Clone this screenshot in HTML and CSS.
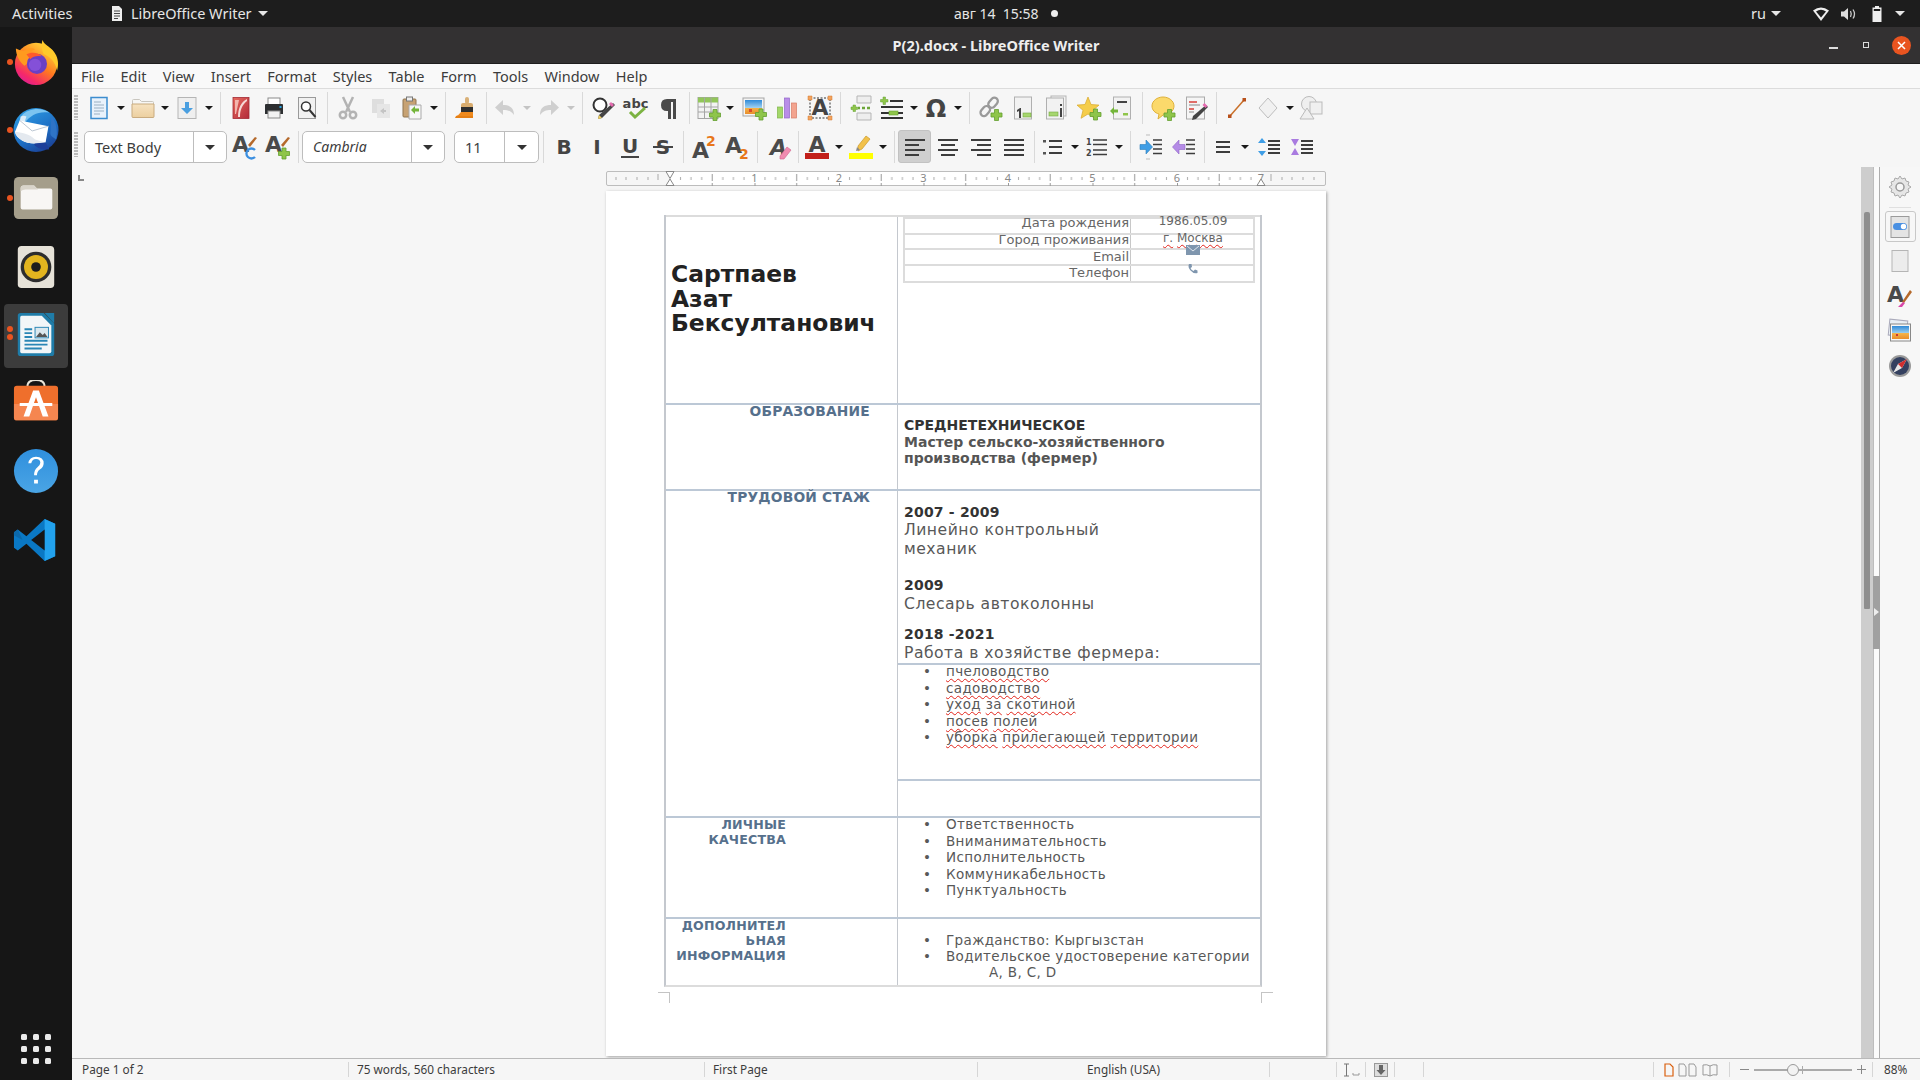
FILE: index.html
```html
<!DOCTYPE html>
<html lang="ru">
<head>
<meta charset="utf-8">
<title>P(2).docx - LibreOffice Writer</title>
<link rel="stylesheet" href="styles.css">
</head>
<body>
<svg class="defs" width="0" height="0" aria-hidden="true"><defs>
<path id="plus" d="M15.5 12.5h4v3.5h3.5v4h-3.5v3.5h-4v-3.5h-3.5v-4h3.5z" fill="#8fc54a" stroke="#63a030" stroke-width=".8"/>
<linearGradient id="ffg" x1=".8" y1=".1" x2=".2" y2="1"><stop offset="0" stop-color="#ffd338"/><stop offset=".45" stop-color="#ff7a1f"/><stop offset=".8" stop-color="#f5286a"/><stop offset="1" stop-color="#d81f9e"/></linearGradient>
<linearGradient id="tbg" x1=".2" y1="0" x2=".8" y2="1"><stop offset="0" stop-color="#2f9fe6"/><stop offset=".6" stop-color="#1c6cc2"/><stop offset="1" stop-color="#1b3a8f"/></linearGradient>
<linearGradient id="hlp" x1="0" y1="0" x2="0" y2="1"><stop offset="0" stop-color="#2f8fdd"/><stop offset="1" stop-color="#4aa5e5"/></linearGradient>
<linearGradient id="sky" x1="0" y1="0" x2="0" y2="1"><stop offset="0" stop-color="#2f8ad8"/><stop offset=".55" stop-color="#9fd0f0"/><stop offset=".56" stop-color="#f4b34a"/><stop offset="1" stop-color="#e98d2b"/></linearGradient>
<linearGradient id="pdfg" x1="0" y1="0" x2="1" y2="1"><stop offset="0" stop-color="#e76a5e"/><stop offset="1" stop-color="#b22a3a"/></linearGradient>
<linearGradient id="fld" x1="0" y1="0" x2="0" y2="1"><stop offset="0" stop-color="#f6e2c0"/><stop offset="1" stop-color="#eccf9f"/></linearGradient>
</defs></svg>
<div class="app">
  <header class="topbar">
    <span class="tb-activities">Activities</span>
    <svg class="tb-docicon" viewBox="0 0 12 15"><path d="M1 0h7l3 3v12H1z" fill="#eee"/><path d="M3 5h6M3 7.500h6M3 10h6M3 12.500h4" stroke="#444"/></svg>
    <span class="tb-app">LibreOffice Writer</span><i class="caret tb-c1"></i>
    <span class="tb-date">авг 14&nbsp;&nbsp;15:58</span><i class="tb-dot"></i>
    <span class="tb-lang">ru</span><i class="caret tb-c2"></i>
    <svg class="tb-wifi" viewBox="0 0 16 14"><path d="M0 3.500Q8-2.500 16 3.500L8 14z" fill="#eee"/><path d="M3 4.600Q8 1 13 4.600L8 10.500z" fill="#1d1d1d"/></svg>
    <svg class="tb-vol" viewBox="0 0 16 14"><path d="M0 4.500h3L7 1v12L3 9.500H0z" fill="#ddd"/><path d="M9.500 4q1.500 3 0 6M12 2.500q3 4.500 0 9" stroke="#ccc" fill="none" stroke-width="1.300"/></svg>
    <svg class="tb-bat" viewBox="0 0 10 16"><path d="M3 0h4v1.500h2.500V16H.5V1.500H3z" fill="#eee"/><rect x="1.800" y="3" width="6.400" height="2" fill="#1d1d1d"/></svg>
    <i class="caret tb-c3"></i>
  </header>
  <div class="desk">
    <nav class="dock">
      <div class="tile">
        <i class="run r1"></i>
        <svg class="dk" viewBox="0 0 48 48"><circle cx="24" cy="26" r="22" fill="url(#ffg)"/><path d="M31 1c1 6 10 7 14 16 3 6 2 13 1 16-2-10-8-15-14-17-2-5-3-11-1-15z" fill="#ffca2b"/><path d="M3 10c3 1 6 3 9 2 5-3 9-3 11-1-4 1-7 4-7 6 3 0 4 1 6 3L12 28C7 24 3 17 3 10z" fill="#ff9a1f"/><circle cx="25" cy="26" r="10.500" fill="#6b3fc4"/><circle cx="23" cy="27" r="6.500" fill="#8450d8"/><path d="M14 16c5-3 13-2 16 2-5-1-9 0-12 3z" fill="#ff5a2b"/></svg>
      </div>
      <div class="tile">
        <i class="run r1"></i>
        <svg class="dk" viewBox="0 0 48 48"><ellipse cx="24" cy="24" rx="23.500" ry="23" fill="url(#tbg)"/><path d="M9 9C16 1 30 0 38 6 28 4 18 8 12 17z" fill="#7cc4f0"/><path d="M8 10q3-2 6 0l-2 6-5-1z" fill="#dcecf8"/><path d="M2 26 7 14l30 6-3 17-11 1C12 38 4 33 2 26z" fill="#fff"/><path d="M7 14l13 11 17-5" fill="none" stroke="#b9c4d1"/><path d="M2 26c6 0 16 2 21 8l11 3-11 1C12 38 4 33 2 26z" fill="#e4e9ef"/><path d="M40 9c5 7 7 16 5 25-3-2-6-4-6-6z" fill="#2f74c6"/><path d="M34 37l-11 1c-4 1 6 8 15 6z" fill="#1d3f9a"/></svg>
      </div>
      <div class="tile">
        <i class="run r1"></i>
        <svg class="dk" viewBox="0 0 48 48"><rect x="1" y="2" width="46" height="44" rx="5" fill="#a59e8b"/><path d="M8 14q0-3 3-3h11l3 3h14q2 0 2 2v18q0 2-2 2H10q-2 0-2-2z" fill="#f8f6f4"/><path d="M8 17v-3q0-3 3-3h11l4 4H13q-3 0-5 2z" fill="#d9d4ca"/></svg>
      </div>
      <div class="tile">
        <svg class="dk" viewBox="0 0 48 48"><rect x="5" y="2" width="38" height="44" rx="4" fill="#e6e2d8"/><circle cx="24" cy="24" r="16" fill="#2d2d2d"/><circle cx="24" cy="24" r="12.500" fill="#e3b51f"/><circle cx="24" cy="24" r="5" fill="#1d1d1d"/></svg>
      </div>
      <div class="tile tile-on">
        <i class="run r2a"></i><i class="run r2b"></i>
        <svg class="dk" viewBox="0 0 48 48"><path d="M8 1h24l11 11v31q0 3-3 3H8q-3 0-3-3V4q0-3 3-3z" fill="#1f7ca8"/><path d="M9 4h21l10 10v27q0 2-2 2H9q-1.500 0-1.500-2V6Q7.500 4 9 4z" fill="#f2f6f8"/><path d="M33 1h10v10q0 1-1 0z" fill="#1f7ca8"/><path d="M12 18h8M12 22h8M12 26h8M12 30h24M12 34h24M12 38h18" stroke="#2a86b5" stroke-width="2"/><rect x="23" y="16" width="14" height="11" fill="#dbe8ee" stroke="#2a86b5"/><path d="M24 26l4-5 3 3 2-2 3 4z" fill="#555"/></svg>
      </div>
      <div class="tile">
        <svg class="dk" viewBox="0 0 48 48"><path d="M15 7q0-7 9-7t9 7" fill="none" stroke="#e9e4d8" stroke-width="2"/><rect x="1" y="6" width="46" height="36" rx="3" fill="#ef6f2c"/><path d="M1 25h46v14q0 3-3 3H4q-3 0-3-3z" fill="#f58650"/><path d="M21 11h6l10 27h-6L24 18l-7 20h-6z" fill="#fff"/><path d="M7 24h34v3H7z" fill="#fff"/></svg>
      </div>
      <div class="tile">
        <svg class="dk" viewBox="0 0 48 48"><circle cx="24" cy="24" r="23" fill="url(#hlp)"/><path d="M16 16q1-7 8-7 8 0 8 7 0 4-4 6.500-3 2-3 6h-3q0-6 3.500-8.500 3-2 3-4.500 0-4-4.500-4-4 0-5 4.500zM22 33h4v4h-4z" fill="#fff"/></svg>
      </div>
      <div class="tile">
        <svg class="dk" viewBox="0 0 48 48"><path d="M33 2 44 7v34l-11 5-19-18L5 35l-4-3 0-16 4-3 9 7z" fill="#0a78c4"/><path d="M33 2 44 7v34l-11 5z" fill="#22a2ee"/><path d="M33 13v22L19 24z" fill="#161616"/><path d="M5 13l-4 3v3l9 5z" fill="#0c68aa"/></svg>
      </div>
      <div class="apps"><i></i><i></i><i></i><i></i><i></i><i></i><i></i><i></i><i></i></div>
    </nav>
    <div class="win">
      <div class="titlebar">
        <span></span>
        <span class="title">P(2).docx - LibreOffice Writer</span>
        <div class="wctl">
          <i class="w-min"></i><i class="w-max"></i>
          <svg class="w-close" viewBox="0 0 19 19"><circle cx="9.500" cy="9.500" r="9.500" fill="#e95420"/><path d="M6 6l7 7M13 6l-7 7" stroke="#fff" stroke-width="1.500"/></svg>
        </div>
      </div>
      <div class="menubar">
        <span>File</span><span>Edit</span><span>View</span><span>Insert</span><span>Format</span><span>Styles</span><span>Table</span><span>Form</span><span>Tools</span><span>Window</span><span>Help</span>
      </div>
      <div class="toolbar tb1">
        <i class="grip"></i>
        <b class="bd"><svg class="i" viewBox="0 0 24 24"><path d="M4 1.500h16v21H4z" fill="#e9f2fb" stroke="#3c8dcf" stroke-width="1.500"/><path d="M7 6h7M7 9h10M7 12h10M7 15h10M7 18h6" stroke="#9bb0c2"/></svg></b><b class="ar"></b>
        <b class="bd"><svg class="i" viewBox="0 0 24 24"><path d="M1.500 6V4.500q0-1 1-1h6l2 2h11q1 0 1 1V21H1.500z" fill="#f7f7f5" stroke="#c9c6bf"/><path d="M1 8h22v12.500q0 1-1 1H2q-1 0-1-1z" fill="url(#fld)" stroke="#c9ab7f"/></svg></b><b class="ar"></b>
        <b class="bd"><svg class="i" viewBox="0 0 24 24"><rect x="3" y="1.500" width="18" height="21" fill="#efefef" stroke="#b5b5b5"/><path d="M10 6h4v6h4l-6 6-6-6h4z" fill="#4a9fe0"/></svg></b><b class="ar"></b>
        <i class="sp"></i>
        <b class="b"><svg class="i" viewBox="0 0 24 24"><rect x="4" y="1.500" width="16" height="21" fill="url(#pdfg)" stroke="#a32a33" stroke-width=".8"/><path d="M18 3C12 6 9 12 9 21h2c0-7 2-12 7-16z" fill="#f6d9d6"/><path d="M6 4h4L7 18H6z" fill="#f3b6ae"/></svg></b>
        <b class="b"><svg class="i" viewBox="0 0 24 24"><rect x="6" y="2" width="12" height="7" fill="#fff" stroke="#8a8a8a"/><path d="M3 9q0-1 1-1h16q1 0 1 1v9H3z" fill="#2d2f31"/><rect x="6" y="15" width="12" height="7" fill="#f2f2f2" stroke="#8a8a8a"/><rect x="17.500" y="10" width="2" height="2" fill="#29a3e0"/></svg></b>
        <b class="b"><svg class="i" viewBox="0 0 24 24"><rect x="3.500" y="1.500" width="17" height="21" fill="#f1f1f1" stroke="#9a9a9a"/><circle cx="11" cy="10.500" r="4.500" fill="#fff" stroke="#333" stroke-width="1.500"/><path d="M14.500 14l6 7" stroke="#333" stroke-width="2"/></svg></b>
        <i class="sp"></i>
        <b class="b"><svg class="i" viewBox="0 0 24 24" fill="none" stroke="#b3b3b3" stroke-width="2.500"><path d="M7 1l7 15M17 1l-7 15"/><circle cx="7" cy="19" r="3.200"/><circle cx="17" cy="19" r="3.200"/></svg></b>
        <b class="b"><svg class="i" viewBox="0 0 24 24"><rect x="3" y="3" width="12" height="14" fill="#dedede"/><rect x="8" y="8" width="13" height="14" fill="#e6e6e6"/><path d="M15 12l-4 3 4 3v-2h2v-2h-2z" fill="#c4c4c4"/></svg></b>
        <b class="bd"><svg class="i" viewBox="0 0 24 24"><rect x="3" y="3" width="13" height="18" rx="1" fill="#c7a273" stroke="#8f7450"/><rect x="6.500" y="1" width="6" height="4" fill="#eee" stroke="#777"/><path d="M9 9h12v14H9z" fill="#f7f7f7" stroke="#aaa"/><path d="M11 14l4-4v2.500h4v3h-4V18z" fill="#74b53a"/></svg></b><b class="ar"></b>
        <i class="sp"></i>
        <b class="b b-brush"><svg class="i" viewBox="0 0 24 24"><rect x="10" y="1" width="4" height="7" rx="2" fill="#d9b077"/><path d="M6 9q0-2 2-2h8q2 0 2 2v3H6z" fill="#d8ac6f"/><rect x="6" y="11" width="12" height="5" fill="#2f2f2f"/><path d="M6 16h12v4H1q3-1 5-4z" fill="#f08a1d"/><path d="M1 20h17v2H0z" fill="#e57f14"/></svg></b>
        <i class="sp"></i>
        <b class="bd"><svg class="i" viewBox="0 0 24 24"><path d="M10 4v5c6 0 11 2 11 10-3-4-6-5-11-5v5L2 11.500z" fill="#cfcfcf"/></svg></b><b class="ar off"></b>
        <b class="bd"><svg class="i" viewBox="0 0 24 24"><path d="M14 4v5C8 9 3 11 3 19c3-4 6-5 11-5v5l8-7.500z" fill="#cfcfcf"/></svg></b><b class="ar off"></b>
        <i class="sp"></i>
        <b class="b"><svg class="i" viewBox="0 0 24 24"><circle cx="9" cy="9" r="6.500" fill="#fff" stroke="#333" stroke-width="2"/><path d="M22 7l2 2-13 13-4 1 1-4z" fill="#444"/><path d="M20 6l3 3-2 2-3-3z" fill="#e56bb0"/><path d="M8 19l-1 4 4-1z" fill="#f0d060"/></svg></b>
        <b class="b"><svg class="i" viewBox="0 0 24 24"><text x="11.500" y="12" class="sv-abc">abc</text><path d="M6 16l5 5L21 12" fill="none" stroke="#7cb342" stroke-width="3"/></svg></b>
        <b class="b"><svg class="i" viewBox="0 0 24 24"><path d="M21 3H10Q4 3 4 9t6 6h1v8h3V6h2v17h3V3z" fill="#4a4a4a"/></svg></b>
        <i class="sp"></i>
        <b class="bd"><svg class="i" viewBox="0 0 24 24"><rect x="2" y="1.500" width="20" height="21" fill="#f3f3f3" stroke="#a5a5a5"/><rect x="2" y="1.500" width="20" height="5" fill="#92c65a"/><path d="M2 11h20M2 16h20M8.500 1.500v21M15 1.500v21" stroke="#a5a5a5"/><use href="#plus" x="1.500" y="1"/></svg></b><b class="ar"></b>
        <b class="b"><svg class="i" viewBox="0 0 24 24"><rect x="1" y="2" width="21" height="18" fill="#f4f4f4" stroke="#a5a5a5"/><rect x="3" y="4" width="17" height="14" fill="url(#sky)"/><path d="M7 13h3v3H7z" fill="#d94a2a"/><use href="#plus" x="1.500" y=".5"/></svg></b>
        <b class="b"><svg class="i" viewBox="0 0 24 24"><rect x="2.500" y="11" width="5" height="11" fill="#a4d86a" stroke="#7fb548" stroke-width=".7"/><rect x="9.500" y="2" width="5" height="20" fill="#b98de8" stroke="#9266c9" stroke-width=".7"/><rect x="16.500" y="7" width="5" height="15" fill="#f3a48f" stroke="#d87c66" stroke-width=".7"/></svg></b>
        <b class="b"><svg class="i" viewBox="0 0 24 24"><rect x="2" y="2" width="20" height="20" fill="none" stroke="#333" stroke-dasharray="2 1.500"/><text x="12" y="19" class="sv-a" text-anchor="middle">A</text><path d="M0 0h4v4H0zM20 0h4v4h-4zM0 20h4v4H0zM20 20h4v4h-4z" fill="#f2a35e" stroke="#d07a30" stroke-width=".5"/></svg></b>
        <i class="sp"></i>
        <b class="b"><svg class="i" viewBox="0 0 24 24"><path d="M8 0h14v7H8zM8 17h14v7H8z" fill="#eee" stroke="#b5b5b5"/><path d="M9 12h2M13 12h3M18 12h3" stroke="#6da63a" stroke-width="2.500"/><path d="M2 11h2V9h2.500v2h2v2.500h-2v2H4v-2H2z" fill="#8fc54a" stroke="#63a030" stroke-width=".5"/></svg></b>
        <b class="bd"><svg class="i" viewBox="0 0 24 24"><path d="M10 5h13M1 11h22M1 17h8M18 17h5M1 22h22" stroke="#333" stroke-width="2"/><rect x="9" y="15" width="9" height="4" fill="#8fc54a" stroke="#63a030" stroke-width=".6"/><path d="M3 1h2.500v2.500H8V6H5.500v2.500H3V6H.5V3.500H3z" fill="#8fc54a" stroke="#63a030" stroke-width=".5"/></svg></b><b class="ar"></b>
        <b class="bd"><svg class="i" viewBox="0 0 24 24"><text x="12" y="21" class="sv-o" text-anchor="middle">Ω</text></svg></b><b class="ar"></b>
        <i class="sp"></i>
        <b class="b"><svg class="i" viewBox="0 0 24 24"><g fill="none" stroke="#9a9a9a" stroke-width="2.300"><rect x="12" y="1" width="7" height="11" rx="3.500" transform="rotate(40 15 6)"/><rect x="4" y="10" width="7" height="11" rx="3.500" transform="rotate(40 8 15)"/></g><use href="#plus" x="1" y="1"/></svg></b>
        <b class="b"><svg class="i" viewBox="0 0 24 24"><rect x="3.500" y="1" width="17" height="22" fill="#f2f2f2" stroke="#b0b0b0"/><path d="M6 14l3-2h1v10H8v-7l-2 1z" fill="#444"/><rect x="12" y="17" width="8" height="4" fill="#a6d66e" stroke="#76a940" stroke-width=".6"/></svg></b>
        <b class="b"><svg class="i" viewBox="0 0 24 24"><rect x="7" y="0" width="15" height="20" fill="#f2f2f2" stroke="#b5b5b5"/><rect x="2.500" y="2" width="17" height="21" fill="#f2f2f2" stroke="#b0b0b0"/><rect x="5" y="16" width="9" height="4" fill="#a6d66e" stroke="#76a940" stroke-width=".6"/><path d="M16 12h2v9h-2zM16 8h2v2h-2z" fill="#444"/></svg></b>
        <b class="b"><svg class="i" viewBox="0 0 24 24"><path d="M11 1l3 7.500 8 .6-6 5.200 2 8L11 18l-7 4.300 2-8L0 9.100l8-.6z" fill="#f5cd4a" stroke="#d9a72a" stroke-width=".7"/><use href="#plus" x="1" y=".5"/></svg></b>
        <b class="b"><svg class="i" viewBox="0 0 24 24"><rect x="3.500" y="1" width="17" height="22" fill="#f2f2f2" stroke="#b0b0b0"/><path d="M7 6h10" stroke="#444" stroke-width="2"/><rect x="13" y="17" width="5" height="2.500" fill="#8fc54a"/><path d="M0 15l4-4v2.500h4v3H4V19z" fill="#74b53a"/></svg></b>
        <i class="sp"></i>
        <b class="b"><svg class="i" viewBox="0 0 24 24"><path d="M12 1c6 0 11 4 11 9s-5 9-11 9l-5 4 1-5c-4-1-7-4-7-8 0-5 5-9 11-9z" fill="#fbd96b" stroke="#dfb13a"/><use href="#plus" x="1" y="1"/></svg></b>
        <b class="b"><svg class="i" viewBox="0 0 24 24"><rect x="2.500" y="1" width="18" height="22" fill="#f5f5f5" stroke="#aaa"/><path d="M5 6h8M5 13h5" stroke="#d9423a" stroke-width="1.500"/><path d="M5 9h11M5 16h5" stroke="#888"/><path d="M22 9l2 2-12 12-4 1 1-4z" fill="#444"/><path d="M20.500 7l3 3-2 2-3-3z" fill="#e56bb0"/></svg></b>
        <i class="sp"></i>
        <b class="b"><svg class="i" viewBox="0 0 24 24"><path d="M5 20L19 4" stroke="#c9702a" stroke-width="1.500"/><rect x="3" y="18.500" width="3.500" height="3.500" fill="#b8501a"/><rect x="17.500" y="2" width="3.500" height="3.500" fill="#b8501a"/></svg></b>
        <b class="bd"><svg class="i" viewBox="0 0 24 24"><path d="M12 2l9 10-9 10-9-10z" fill="#f1f1f1" stroke="#bdbdbd"/></svg></b><b class="ar"></b>
        <b class="b b-shapes"><svg class="i" viewBox="0 0 24 24"><circle cx="10" cy="8" r="7.500" fill="#efefef" stroke="#bbb"/><rect x="11" y="6" width="12" height="12" fill="#f0f0f0" stroke="#bbb"/><path d="M8 12l7 11H1z" fill="#efefef" stroke="#bbb"/></svg></b>
      </div>
      <div class="toolbar tb2">
        <i class="grip"></i>
        <div class="combo c-style"><span>Text Body</span><b class="cb"></b></div>
        <b class="b"><svg class="i" viewBox="0 0 24 24"><text x="-1" y="17" class="sv-a2">A</text><path d="M22 15a5 5 0 1 0 0 7" fill="none" stroke="#3b8fe0" stroke-width="2.300"/><path d="M22 2l2 1-7 9-2-2z" fill="#b5692b"/></svg></b>
        <b class="b"><svg class="i" viewBox="0 0 24 24"><text x="-1" y="17" class="sv-a2">A</text><path d="M22 2l2 1-7 9-2-2z" fill="#b5692b"/><use href="#plus" x=".5" y=".5"/></svg></b>
        <i class="sp"></i>
        <div class="combo c-font"><span class="it">Cambria</span><b class="cb"></b></div>
        <div class="combo c-size"><span>11</span><b class="cb"></b></div>
        <i class="sp"></i>
        <b class="b"><svg class="i" viewBox="0 0 24 24"><text x="12" y="19" class="sv-l sv-bold" text-anchor="middle">B</text></svg></b>
        <b class="b"><svg class="i" viewBox="0 0 24 24"><text x="12" y="19" class="sv-l sv-it" text-anchor="middle">I</text></svg></b>
        <b class="b"><svg class="i" viewBox="0 0 24 24"><text x="12" y="18" class="sv-l" text-anchor="middle">U</text><path d="M3 22h18" stroke="#444" stroke-width="2"/></svg></b>
        <b class="b"><svg class="i" viewBox="0 0 24 24"><text x="12" y="19" class="sv-l" text-anchor="middle">S</text><path d="M2 12h20" stroke="#444" stroke-width="2"/></svg></b>
        <i class="sp"></i>
        <b class="b"><svg class="i" viewBox="0 0 24 24"><text x="0" y="23" class="sv-a2">A</text><text x="14" y="11" class="sv-n">2</text></svg></b>
        <b class="b"><svg class="i" viewBox="0 0 24 24"><text x="0" y="18" class="sv-a2">A</text><text x="14" y="24" class="sv-n">2</text></svg></b>
        <i class="sp"></i>
        <b class="b b-clear"><svg class="i" viewBox="0 0 24 24"><text x="3" y="20" class="sv-a2 sv-it">A</text><path d="M13 21l7-9 4 3-7 9h-4z" fill="#f08cb0" stroke="#d0638c" stroke-width=".6"/></svg></b>
        <i class="sp"></i>
        <b class="bd"><svg class="i" viewBox="0 0 24 24"><text x="12" y="17" class="sv-a2" text-anchor="middle">A</text><rect x="0" y="18" width="24" height="6" fill="#c2201a"/></svg></b><b class="ar"></b>
        <b class="bd"><svg class="i" viewBox="0 0 24 24"><path d="M17 1l4 3-8 10-4 2 0-5z" fill="#f2c14a" stroke="#c99a2a" stroke-width=".7"/><path d="M8 12l3 3-4 1z" fill="#888"/><rect x="0" y="18" width="24" height="6" fill="#ffff00"/></svg></b><b class="ar"></b>
        <i class="sp"></i>
        <b class="b on"><svg class="i" viewBox="0 0 24 24"><path d="M2 5h20M2 10h14M2 15h20M2 20h14" stroke="#3d3d3d" stroke-width="2"/></svg></b>
        <b class="b"><svg class="i" viewBox="0 0 24 24"><path d="M2 5h20M5 10h14M2 15h20M5 20h14" stroke="#3d3d3d" stroke-width="2"/></svg></b>
        <b class="b"><svg class="i" viewBox="0 0 24 24"><path d="M2 5h20M8 10h14M2 15h20M8 20h14" stroke="#3d3d3d" stroke-width="2"/></svg></b>
        <b class="b"><svg class="i" viewBox="0 0 24 24"><path d="M2 5h20M2 10h20M2 15h20M2 20h20" stroke="#3d3d3d" stroke-width="2"/></svg></b>
        <i class="sp"></i>
        <b class="bd"><svg class="i" viewBox="0 0 24 24"><path d="M8 6h13M8 12h13M8 18h13" stroke="#3d3d3d" stroke-width="1.800"/><path d="M2 5h3v2.500H2zM2 17h3v2.500H2z" fill="#555"/></svg></b><b class="ar"></b>
        <b class="bd"><svg class="i" viewBox="0 0 24 24"><path d="M8 5h14M8 9.500h14M8 15h14M8 19.500h14" stroke="#3d3d3d" stroke-width="1.600"/><text x="1" y="10" class="sv-d">1</text><text x="1" y="21" class="sv-d">2</text></svg></b><b class="ar"></b>
        <i class="sp"></i>
        <b class="b"><svg class="i" viewBox="0 0 24 24"><path d="M14 5h9M14 9.500h9M14 14h9M14 18.500h9" stroke="#3d3d3d" stroke-width="1.500"/><path d="M7 0h4M7 24h4" stroke="#bbb"/><path d="M1 9.500h6V5l6.500 7L7 19v-4.500H1z" fill="#3f9ee6" stroke="#2b7dbb" stroke-width=".6"/></svg></b>
        <b class="b"><svg class="i" viewBox="0 0 24 24"><path d="M14 5h9M14 9.500h9M14 14h9M14 18.500h9" stroke="#3d3d3d" stroke-width="1.500"/><path d="M13 9.500H7V5L.5 12 7 19v-4.500h6z" fill="#b48be6" stroke="#8e63c6" stroke-width=".6"/></svg></b>
        <i class="sp"></i>
        <b class="bd"><svg class="i" viewBox="0 0 24 24"><path d="M5 7h14M5 12h14M5 17h14" stroke="#3d3d3d" stroke-width="2"/></svg></b><b class="ar"></b>
        <b class="b"><svg class="i" viewBox="0 0 24 24"><path d="M11 6h12M11 10h12M11 14h12M11 18h12" stroke="#3d3d3d" stroke-width="1.800"/><path d="M5 3l4 5H1zM5 21l4-5H1z" fill="#3f9ee6"/></svg></b>
        <b class="b"><svg class="i" viewBox="0 0 24 24"><path d="M11 6h12M11 10h12M11 14h12M11 18h12" stroke="#3d3d3d" stroke-width="1.800"/><path d="M1 4h8l-4 7zM1 20h8l-4-7z" fill="#a97be0"/></svg></b>
      </div>
      <div class="work">
        <div class="canvas">
          <div class="corner"></div>
          <div class="ruler">
            <svg width="720" height="15" viewBox="0 0 720 15">
              <defs><pattern id="tk" x="64" y="0" width="84.5" height="15" patternUnits="userSpaceOnUse"><path d="M10.500 6v3M21 6v3M31.700 6v3M52.800 6v3M63.400 6v3M74 6v3" stroke="#aaa"/><path d="M42.200 3v7M42.200 12v3M.5 12v3" stroke="#999"/></pattern></defs>
              <rect x="64" y="0" width="591" height="15" fill="#fff"/>
              <rect x=".5" y=".5" width="719" height="14" rx="1.500" fill="none" stroke="#bdbdbd"/>
              <path d="M10 6v3M20 6v3M31 6v3M42 6v3M52 3v6M665 3v7M676 6v3M686 6v3M697 6v3M708 6v3" stroke="#aaa"/>
              <rect x="64" y="0" width="591" height="15" fill="url(#tk)"/>
              <g class="rn"><text x="148.500" y="11">1</text><text x="233" y="11">2</text><text x="317.500" y="11">3</text><text x="402" y="11">4</text><text x="486.500" y="11">5</text><text x="571" y="11">6</text><text x="655" y="11">7</text></g>
              <path d="M60 .5h8l-4 7zM64 8l4 6.500h-8z" fill="#fff" stroke="#888"/>
              <path d="M655 8l4 6.500h-8z" fill="#fff" stroke="#888"/>
            </svg>
          </div>
          <main class="page">
            <div class="resume">
              <section class="row r-head">
                <div class="cell-l name"><div>Сартпаев</div><div>Азат</div><div>Бексултанович</div></div>
                <div class="cell-r">
                  <div class="info">
                    <div class="ir"><span class="k">Дата рождения</span><span class="v v-date">1986.05.09</span></div>
                    <div class="ir"><span class="k">Город проживания</span><span class="v"><u>г.</u> <u>Москва</u></span></div>
                    <div class="ir"><span class="k">Email</span><span class="v"><svg class="mini" viewBox="0 0 14 10"><rect width="14" height="10" fill="#7f96ae"/><path d="M1 1l6 5 6-5" fill="none" stroke="#dfe6ee"/></svg></span></div>
                    <div class="ir"><span class="k">Телефон</span><span class="v"><svg class="mini" viewBox="0 0 14 10"><path d="M3 0l2.500 0 .5 3-1.500 1q.5 2 3 3l1.500-1.500 2.500 1 0 2.500q-4 1-7-2.500T3 0z" fill="#7f96ae"/></svg></span></div>
                  </div>
                </div>
              </section>
              <section class="row r-edu">
                <div class="cell-l lbl">ОБРАЗОВАНИЕ</div>
                <div class="cell-r edu"><div class="strong">СРЕДНЕТЕХНИЧЕСКОЕ</div><div class="semi">Мастер сельско-хозяйственного</div><div class="semi">производства (фермер)</div></div>
              </section>
              <section class="row r-exp">
                <div class="cell-l lbl">ТРУДОВОЙ СТАЖ</div>
                <div class="cell-r stack">
                  <div class="exp">
                    <div class="strong">2007 - 2009</div><div>Линейно контрольный</div><div>механик</div>
                    <div class="strong mt1">2009</div><div>Слесарь автоколонны</div>
                    <div class="strong mt2">2018 -2021</div><div>Работа в хозяйстве фермера:</div>
                  </div>
                  <ul class="list l-farm">
                    <li><span><u>пчеловодство</u></span></li><li><span><u>садоводство</u></span></li><li><span><u>уход</u> <u>за</u> <u>скотиной</u></span></li><li><span><u>посев</u> <u>полей</u></span></li><li><span><u>уборка</u> <u>прилегающей</u> <u>территории</u></span></li>
                  </ul>
                  <div class="blank"></div>
                </div>
              </section>
              <section class="row r-qual">
                <div class="cell-l lbl lbl2"><div>ЛИЧНЫЕ</div><div>КАЧЕСТВА</div></div>
                <div class="cell-r"><ul class="list l-qual"><li>Ответственность</li><li>Вниманимательность</li><li>Исполнительность</li><li>Коммуникабельность</li><li>Пунктуальность</li></ul></div>
              </section>
              <section class="row r-add">
                <div class="cell-l lbl lbl2 lbl3"><div>ДОПОЛНИТЕЛ</div><div>ЬНАЯ</div><div>ИНФОРМАЦИЯ</div></div>
                <div class="cell-r"><ul class="list l-add"><li>Гражданство: Кыргызстан</li><li>Водительское удостоверение категории</li></ul><div class="cats">A, B, C, D</div></div>
              </section>
            </div>
            <div class="crops"><i class="crop-l"></i><i class="crop-r"></i></div>
          </main>
        </div>
        <div class="scroll"><i class="thumb"></i></div>
        <div class="sbdiv"><i class="sbgrip"></i></div>
        <aside class="side">
          <svg class="si" viewBox="0 0 24 24"><path d="M12 1l2 3 3-1 1 3 3 1-1 3 3 2-3 2 1 3-3 1-1 3-3-1-2 3-2-3-3 1-1-3-3-1 1-3-3-2 3-2-1-3 3-1 1-3 3 1z" fill="#e6e6e6" stroke="#aaa"/><circle cx="12" cy="12" r="4" fill="#f7f7f7" stroke="#999" stroke-width="1.500"/></svg>
          <i class="side-sep"></i>
          <div class="side-on"><svg class="si" viewBox="0 0 24 24"><rect x="3" y="1.500" width="18" height="21" fill="#e4e4e4" stroke="#9a9a9a"/><rect x="5" y="8" width="14" height="7" rx="3.500" fill="#4a90e2"/><circle cx="15.500" cy="11.500" r="2.700" fill="#fff"/></svg></div>
          <svg class="si" viewBox="0 0 24 24"><rect x="4" y="1.500" width="16" height="21" fill="#ececec" stroke="#b5b5b5"/></svg>
          <svg class="si" viewBox="0 0 24 24"><text x="-1" y="18" class="sv-a2">A</text><path d="M24 8l-8 11-2-1 8-12z" fill="#b5692b"/><path d="M15 18l2 1-3 4-4 0z" fill="#d946a8"/></svg>
          <svg class="si" viewBox="0 0 24 24"><rect x="1" y="1" width="18" height="16" fill="#e8eef4" stroke="#aab" transform="rotate(6 10 9)"/><rect x="2.500" y="5" width="20" height="17" fill="#f7f7f7" stroke="#888"/><rect x="4" y="7" width="17" height="13" fill="url(#sky)"/><path d="M8 15h2v2H8z" fill="#c33"/></svg>
          <svg class="si" viewBox="0 0 24 24"><circle cx="12" cy="12" r="11" fill="#9a9a9a"/><circle cx="12" cy="12" r="9" fill="#34405f"/><path d="M19 5l-5 9-9 5 5-9z" fill="#e8e8e8"/><path d="M19 5l-9 5 4 4z" fill="#d02d2d"/></svg>
        </aside>
      </div>
      <footer class="status">
        <span class="st s1">Page 1 of 2</span>
        <span class="st s2">75 words, 560 characters</span>
        <span class="st s3">First Page</span>
        <span class="st s4">English (USA)</span>
        <span class="st s5"></span>
        <span class="st s6"><svg class="sti" viewBox="0 0 20 14"><path d="M2 1h5M4.500 1v12M2 13h5" stroke="#777" fill="none"/><path d="M11 10v2h6v-2" stroke="#999" fill="none"/></svg></span>
        <span class="st s7"><svg class="sti2" viewBox="0 0 14 14"><rect x=".5" y=".5" width="13" height="13" fill="#ddd" stroke="#999"/><path d="M5 2h4v5h2.500L7 12 2.500 7H5z" fill="#666"/></svg></span>
        <span class="st s8"></span>
        <span class="st s9"></span>
        <span class="st s10">
          <svg class="sti3" viewBox="0 0 10 14"><path d="M1 1h5l3 3v9H1z" fill="none" stroke="#d95f0e" stroke-width="1.200"/></svg>
          <svg class="sti4" viewBox="0 0 20 14"><path d="M1 1h5l2 3v9H1zM11 1h5l2 3v9h-7z" fill="none" stroke="#999"/></svg>
          <svg class="sti5" viewBox="0 0 16 14"><path d="M8 3Q5 1 1 2v10q4-1 7 1 3-2 7-1V2Q11 1 8 3zv10" fill="none" stroke="#999"/></svg>
        </span>
        <span class="st s11">
          <i class="z-m"></i>
          <span class="z-track"><i class="z-knob"></i><i class="z-mid"></i></span>
          <svg class="z-p" viewBox="0 0 9 9"><path d="M4.500 0v9M0 4.500h9" stroke="#888"/></svg>
        </span>
        <span class="st s12">88%</span>
      </footer>
    </div>
  </div>
</div>
</body>
</html>
```

FILE: styles.css
```css
* { box-sizing: border-box; }
html, body { margin: 0; padding: 0; width: 1920px; height: 1080px; overflow: hidden; }
body { font-family: "Noto Sans", "Open Sans", sans-serif; color: #3c3c3c; }
i, b { font-style: normal; font-weight: normal; display: block; flex: none; }
.defs { position: absolute; }
.app { width: 1920px; height: 1080px; display: flex; flex-direction: column; }

.topbar { height: 27px; background: #1d1d1d; color: #e6e6e6; font-size: 14.500px; display: flex; align-items: center; flex: none; line-height: 27px; }
.tb-activities { margin-left: 12px; width: 99px; }
.tb-docicon { width: 12px; height: 15px; }
.tb-app { margin-left: 8px; width: 127px; white-space: nowrap; }
.caret { width: 0; height: 0; border-left: 5px solid transparent; border-right: 5px solid transparent; border-top: 5px solid #e6e6e6; }
.tb-date { margin-left: 686px; width: 92px; white-space: nowrap; font-size: 14px; }
.tb-dot { width: 7px; height: 7px; border-radius: 50%; background: #eee; margin-left: 5px; }
.tb-lang { margin-left: 693px; width: 17px; }
.tb-c2 { margin-left: 3px; }
.tb-wifi { width: 16px; height: 14px; margin-left: 32px; }
.tb-vol { width: 16px; height: 14px; margin-left: 12px; }
.tb-bat { width: 10px; height: 16px; margin-left: 15px; }
.tb-c3 { margin-left: 13px; }

.desk { flex: 1; display: flex; min-height: 0; }
.dock { width: 72px; flex: none; background: #161616; display: flex; flex-direction: column; align-items: center; padding-top: .500px; }
.tile { width: 64px; height: 68.300px; flex: none; position: relative; display: flex; align-items: center; justify-content: center; isolation: isolate; }
.tile-on::before { content: ""; position: absolute; left: 0; right: 0; top: 3px; bottom: 1px; background: #3c3c3c; border-radius: 4px; z-index: -1; }
.dk { width: 46px; height: 46px; }
.run { position: absolute; left: 3px; width: 6px; height: 6px; border-radius: 50%; background: #e95420; }
.r1 { top: 31px; }
.r2a { top: 25px; }
.r2b { top: 33px; }
.apps { margin-top: auto; margin-bottom: 16px; display: grid; grid-template-columns: repeat(3, 6px); gap: 6px; }
.apps i { width: 6px; height: 6px; border-radius: 1.500px; background: #eaeaea; }

.win { flex: 1; display: flex; flex-direction: column; min-width: 0; background: #f6f6f6; }
.titlebar { height: 37px; flex: none; background: #333132; border-bottom: 1px solid #1e1e1e; color: #eee; display: grid; grid-template-columns: 1fr auto 1fr; align-items: center; }
.title { font-size: 14.500px; font-weight: 700; }
.wctl { display: flex; align-items: center; justify-content: flex-end; }
.w-min { width: 9px; height: 1.500px; background: #ddd; margin-top: 6px; }
.w-max { width: 6px; height: 6px; border: 1px solid #ddd; margin-left: 25px; }
.w-close { width: 19px; height: 19px; margin-left: 23px; margin-right: 9px; }

.menubar { height: 25px; flex: none; background: #f9f9f9; border-bottom: 1px solid #dcdcdc; font-size: 14.500px; line-height: 24px; display: flex; gap: 16.300px; padding-left: 9px; }

.toolbar { flex: none; display: flex; align-items: center; position: relative; padding-left: 12px; }
.tb1 { height: 37px; }
.tb2 { height: 41px; }
.grip { position: absolute; left: 2px; top: 6px; width: 4px; height: 25px; background: repeating-linear-gradient(#bbb 0 2px, transparent 2px 3px); }
.b, .bd { height: 33px; display: flex; align-items: center; justify-content: center; border-radius: 3px; }
.b { width: 33px; }
.bd { width: 30px; }
.on { background: #cfcfcf; border: 1px solid #c2c2c2; }
.ar { width: 14px; height: 33px; position: relative; }
.ar::after { content: ""; position: absolute; left: 3px; top: 15px; border-left: 4px solid transparent; border-right: 4px solid transparent; border-top: 4px solid #1a1a1a; }
.ar.off::after { border-top-color: #c4c4c4; }
.sp { width: 8px; height: 32px; position: relative; }
.sp::after { content: ""; position: absolute; left: 3.500px; top: 0; width: 1px; height: 32px; background: #d9d9d9; }
.i { width: 24px; height: 24px; overflow: visible; }
.b-brush { padding-left: 3px; }
.b-clear { padding-left: 3px; }
.b-shapes { padding-right: 6px; }
.sv-abc { font: 700 13px "DejaVu Sans", sans-serif; fill: #444; text-anchor: middle; }
.sv-a { font: 700 22px "DejaVu Sans", sans-serif; fill: #444; }
.sv-o { font: 700 24px "DejaVu Sans", sans-serif; fill: #444; }
.sv-a2 { font: 700 22px "DejaVu Sans", sans-serif; fill: #4a4a4a; }
.sv-it { font-style: italic; }
.sv-l { font: 700 20px "DejaVu Sans", sans-serif; fill: #444; }
.sv-bold { font-weight: 700; }
.sv-n { font: 700 14px "DejaVu Sans", sans-serif; fill: #e8761a; }
.sv-d { font: 700 8px "DejaVu Sans", sans-serif; fill: #444; }

.combo { height: 32px; border: 1px solid #bdbdbd; border-radius: 5px; background: #fff; display: flex; align-items: center; font-size: 14.500px; padding-left: 10px; overflow: hidden; }
.combo span { flex: 1; white-space: nowrap; }
.combo .it { font-style: italic; font-size: 14px; }
.cb { height: 30px; border-left: 1px solid #bdbdbd; position: relative; }
.cb::after { content: ""; position: absolute; left: 50%; top: 13px; margin-left: -5px; border-left: 5px solid transparent; border-right: 5px solid transparent; border-top: 5px solid #333; }
.c-style { width: 143px; }
.c-style .cb { width: 33px; }
.c-font { width: 143px; }
.c-font .cb { width: 33px; }
.c-size { width: 85px; margin-left: 9px; }
.c-size .cb { width: 34px; }
.c-style + .b { margin-left: 1px; }

.work { flex: 1; min-height: 0; display: flex; }
.canvas { width: 1789px; flex: none; overflow: hidden; padding-left: 534px; position: relative; }
.corner { position: absolute; left: 6px; top: 8px; width: 6px; height: 6px; border-left: 2px solid #888; border-bottom: 2px solid #888; }
.ruler { margin-top: 4px; height: 15px; width: 720px; }
.ruler svg { display: block; }
.rn text { font: 11px "Noto Sans", sans-serif; fill: #888; text-anchor: middle; }
.page { margin-top: 5px; width: 720px; height: 865px; background: #fff; box-shadow: 1px 1px 3px rgba(0,0,0,.35); padding: 24px 0 0 58px; }
.resume { width: 598px; font-family: "DejaVu Sans", sans-serif; font-size: 14px; color: #585858; border-left: 2px solid #c4c8ce; border-right: 2px solid #c4c8ce; border-bottom: 2px solid #dcdcdc; }
.row { display: grid; grid-template-columns: 231px 1fr; border-top: 2px solid #bcc8d6; }
.r-head { height: 188px; border-top-color: #dcdcdc; }
.r-edu { height: 86px; }
.r-exp { height: 327px; }
.r-qual { height: 101px; }
.r-add { height: 68px; }
.cell-r { border-left: 1px solid #c4c8ce; min-width: 0; }
.name { padding: 45px 0 0 5px; font-size: 23.400px; font-weight: 700; line-height: 24.500px; color: #222; white-space: nowrap; }
.info { margin: 0 5px 0 5px; border: 2px solid #dcdcdc; }
.ir { height: 15.500px; display: grid; grid-template-columns: 226px 1fr; font-size: 13px; line-height: 14px; border-bottom: 2px solid #dcdcdc; }
.ir:last-child { border-bottom: 0; }
.k { text-align: right; padding-right: 1px; border-right: 1px solid #c8c8c8; color: #666; }
.ir:first-child .k { line-height: 8px; }
.ir:nth-child(2) .k { line-height: 9.500px; }
.ir:nth-child(2) .v { line-height: 7px; }
.ir:nth-child(3) .mini { margin-top: -5px; }
.v { text-align: center; color: #666; font-size: 12px; padding-left: 2px; }
.v-date { line-height: 5px; }
.mini { width: 14px; height: 10px; display: block; margin: -2px auto 0; }
u { text-decoration: underline wavy #e2231a 1px; text-underline-offset: 2px; text-decoration-skip-ink: none; }
.lbl { font-size: 13.800px; font-weight: 700; color: #56708c; text-align: right; padding-right: 27px; line-height: 12px; letter-spacing: .2px; }
.lbl2 { padding-right: 111px; line-height: 15px; margin-top: -1px; font-size: 12.600px; }
.edu { padding: 12px 0 0 6px; line-height: 16.500px; }
.strong { font-weight: 700; color: #333; }
.semi { font-weight: 700; color: #555; }
.edu .strong, .edu .semi { font-size: 14px; }
.stack { display: flex; flex-direction: column; }
.exp { height: 172px; padding: 11.500px 0 0 6px; line-height: 18.500px; font-size: 15.600px; letter-spacing: .5px; }
.exp .strong { font-size: 14px; letter-spacing: .2px; }
.mt1 { margin-top: 18px; }
.mt2 { margin-top: 12px; }
.list { list-style: none; margin: -2px 0 0; padding: 0 0 0 25px; font-size: 13.500px; line-height: 16.500px; letter-spacing: .35px; }
.list li { display: flex; }
.list li::before { content: "•"; width: 23px; flex: none; }
.l-farm { height: 116px; border-top: 2px solid #bcc8d6; margin-top: 0; }
.l-farm li:first-child { margin-top: -2px; }
.blank { flex: 1; border-top: 2px solid #bcc8d6; }
.l-add { margin-top: 13px; line-height: 16px; }
.cats { font-size: 13.500px; line-height: 16px; padding-left: 91px; letter-spacing: .35px; }
.crops { display: flex; justify-content: space-between; width: 615px; margin: 5px 0 0 -6px; }
.crop-l { width: 12px; height: 11px; border-top: 1px solid #c4c4c4; border-right: 1px solid #c4c4c4; }
.crop-r { width: 12px; height: 11px; border-top: 1px solid #c4c4c4; border-left: 1px solid #c4c4c4; }

.scroll { width: 12px; flex: none; background: #cdcdcd; padding: 45px 3px 0; }
.thumb { width: 6px; height: 397px; background: #8e8e8e; border-radius: 2px 2px 1px 1px; }
.sbdiv { width: 7px; flex: none; background: #fbfbfb; border-left: 1px solid #bdbdbd; border-right: 1px solid #adadad; position: relative; }
.sbgrip { position: absolute; left: -1px; top: 409px; width: 7px; height: 73px; background: #a0a0a0; }
.sbgrip::after { content: ""; position: absolute; left: 1px; top: 32px; border-left: 5px solid #eee; border-top: 4px solid transparent; border-bottom: 4px solid transparent; }
.side { flex: 1; display: flex; flex-direction: column; align-items: center; padding-top: 8px; background: #f7f7f7; }
.si { width: 24px; height: 24px; margin-bottom: 11px; overflow: visible; }
.side-sep { width: 22px; height: 1px; background: #e0e0e0; margin: -3px 0 3px; }
.side-on { width: 31px; height: 31px; border: 1px solid #c8c8c8; border-radius: 3px; display: flex; align-items: center; justify-content: center; margin-bottom: 7px; }
.side-on .si { margin: 0; }

.status { height: 22px; flex: none; border-top: 1px solid #b9b9b9; background: #f6f6f6; display: flex; align-items: center; font-size: 11.800px; line-height: 15px; }
.st { height: 15px; display: flex; align-items: center; white-space: nowrap; border-left: 1px solid #d6d6d6; flex: none; }
.s1 { width: 276px; padding-left: 10px; border-left: 0; }
.s2 { width: 356px; padding-left: 8px; }
.s3 { width: 273px; padding-left: 8px; }
.s4 { width: 292px; justify-content: center; }
.s5 { width: 67px; }
.s6 { width: 29px; padding-left: 5px; }
.s7 { width: 29px; padding-left: 8px; }
.s8 { width: 29px; }
.s9 { width: 230px; }
.s10 { width: 76px; padding-left: 10px; gap: 4px; }
.s11 { width: 143px; padding-left: 10px; }
.s12 { flex: 1; padding-left: 11px; }
.sti { width: 20px; height: 14px; }
.sti2 { width: 14px; height: 14px; }
.sti3 { width: 10px; height: 14px; }
.sti4 { width: 20px; height: 14px; }
.sti5 { width: 16px; height: 14px; }
.z-m { width: 9px; height: 1px; background: #888; }
.z-track { width: 98px; height: 2px; margin-left: 5px; background: #aaa; position: relative; }
.z-knob { position: absolute; left: 33px; top: -5px; width: 12px; height: 12px; border-radius: 50%; background: #f2f2f2; border: 1px solid #999; }
.z-mid { position: absolute; left: 48px; top: -3px; width: 1px; height: 8px; background: #aaa; }
.z-p { width: 9px; height: 9px; margin-left: 5px; }
```
